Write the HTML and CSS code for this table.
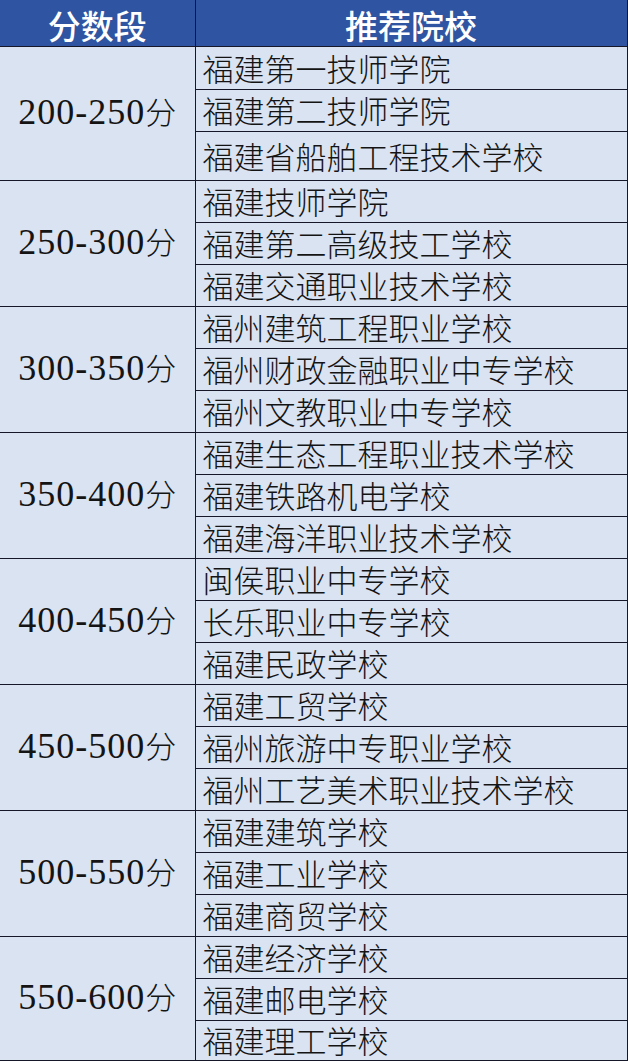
FILE: index.html
```html
<!DOCTYPE html>
<html lang="zh-CN">
<head>
<meta charset="utf-8">
<title>分数段推荐院校</title>
<link rel="stylesheet" href="styles.css">
</head>
<body>
<table class="sheet">
  <colgroup><col class="c-score"><col class="c-school"></colgroup>
  <thead>
    <tr class="head"><th>分数段</th><th>推荐院校</th></tr>
  </thead>
  <tbody>
    <tr class="r43"><td class="score" rowspan="3">200-250<span class="unit">分</span></td><td class="school">福建第一技师学院</td></tr>
    <tr class="r42"><td class="school">福建第二技师学院</td></tr>
    <tr class="r49"><td class="school">福建省船舶工程技术学校</td></tr>

    <tr class="r42"><td class="score" rowspan="3">250-300<span class="unit">分</span></td><td class="school">福建技师学院</td></tr>
    <tr class="r42"><td class="school">福建第二高级技工学校</td></tr>
    <tr class="r42"><td class="school">福建交通职业技术学校</td></tr>

    <tr class="r42"><td class="score" rowspan="3">300-350<span class="unit">分</span></td><td class="school">福州建筑工程职业学校</td></tr>
    <tr class="r42"><td class="school">福州财政金融职业中专学校</td></tr>
    <tr class="r42"><td class="school">福州文教职业中专学校</td></tr>

    <tr class="r42"><td class="score" rowspan="3">350-400<span class="unit">分</span></td><td class="school">福建生态工程职业技术学校</td></tr>
    <tr class="r42"><td class="school">福建铁路机电学校</td></tr>
    <tr class="r42"><td class="school">福建海洋职业技术学校</td></tr>

    <tr class="r42"><td class="score" rowspan="3">400-450<span class="unit">分</span></td><td class="school">闽侯职业中专学校</td></tr>
    <tr class="r42"><td class="school">长乐职业中专学校</td></tr>
    <tr class="r42"><td class="school">福建民政学校</td></tr>

    <tr class="r42"><td class="score" rowspan="3">450-500<span class="unit">分</span></td><td class="school">福建工贸学校</td></tr>
    <tr class="r42"><td class="school">福州旅游中专职业学校</td></tr>
    <tr class="r42"><td class="school">福州工艺美术职业技术学校</td></tr>

    <tr class="r42"><td class="score" rowspan="3">500-550<span class="unit">分</span></td><td class="school">福建建筑学校</td></tr>
    <tr class="r42"><td class="school">福建工业学校</td></tr>
    <tr class="r42"><td class="school">福建商贸学校</td></tr>

    <tr class="r42"><td class="score" rowspan="3">550-600<span class="unit">分</span></td><td class="school">福建经济学校</td></tr>
    <tr class="r42"><td class="school">福建邮电学校</td></tr>
    <tr class="r40"><td class="school">福建理工学校</td></tr>
  </tbody>
</table>
</body>
</html>
```

FILE: styles.css
```css
html, body {
  margin: 0;
  padding: 0;
  background: #ffffff;
}

.sheet {
  border-collapse: collapse;
  table-layout: fixed;
  width: 627px;
  background: #dae3f2;
  color: #141414;
  font-family: "Noto Sans CJK SC", "Liberation Serif", sans-serif;
}

.c-score { width: 195px; }
.c-school { width: 432px; }

.sheet th,
.sheet td {
  padding: 0;
  border: 1px solid #16182a;
  line-height: 1.2;
}

.sheet th:first-child,
.sheet td.score {
  border-left: none;
}

.sheet thead tr:first-child th {
  border-top: none;
}

.head {
  height: 46px;
  background: #2f55a2;
}

.head th {
  color: #ffffff;
  font-size: 33px;
  font-weight: 500;
  line-height: 40px;
  padding-top: 4px;
  text-align: center;
  vertical-align: middle;
}

.r40 { height: 40px; }
.r42 { height: 42px; }
.r43 { height: 43px; }
.r49 { height: 49px; }

.score {
  text-align: center;
  vertical-align: middle;
  font-family: "Liberation Serif", "Noto Sans CJK SC", serif;
  font-size: 36px;
  letter-spacing: 1px;
  padding-top: 2px;
}

.unit {
  font-family: "Noto Sans CJK SC", sans-serif;
  font-size: 31px;
  font-weight: 300;
  letter-spacing: 0;
}

.school {
  text-align: left;
  vertical-align: middle;
  padding-left: 7px !important;
  font-size: 31px;
  font-weight: 300;
  white-space: nowrap;
}
```
